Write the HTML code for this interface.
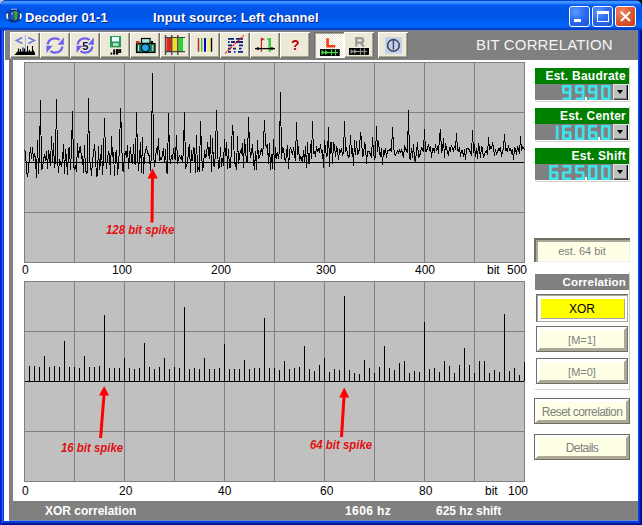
<!DOCTYPE html>
<html><head><meta charset="utf-8">
<style>
*{box-sizing:border-box}
html,body{margin:0;padding:0;width:642px;height:525px;overflow:hidden;background:#0831d9;font-family:"Liberation Sans",sans-serif}
.a{position:absolute}
#frame{left:0;top:0;width:642px;height:525px;background:#0c46d4;border-radius:7px 7px 0 0;
 box-shadow:inset 1px 0 #001ccf, inset -1px 0 #001090, inset 0 -1px #001090, inset 2px 0 #0a2ee0, inset -2px 0 #0018a0, inset 0 -2px #0020a8, inset 3px 0 #2060ff, inset -3px 0 #0030d8, inset 0 -3px #0a36c8}
#title{left:0;top:0;width:642px;height:30px;border-radius:7px 7px 0 0;
 background:linear-gradient(180deg,#0a44c8 0px,#0a44c8 1px,#3d95ff 1px,#3d95ff 3px,#1a70f6 4px,#0058ee 6px,#0054e3 14px,#0058e8 19px,#0064fc 23px,#0066ff 26px,#0060f8 27px,#0048d0 28px,#003cc0 30px)}
.tt{color:#fff;font-weight:bold;font-size:13px;top:10px;text-shadow:1px 1px #0a1e80;white-space:nowrap}
.tb{top:6px;width:21px;height:21px;border:1px solid #fff;border-radius:3px}
.blu{background:radial-gradient(circle at 30% 25%,#5a9cff 0,#2d6cf0 45%,#1850dc 100%)}
#toolbar{left:4px;top:30px;width:634px;height:30px;background:#808080;border-left:1px solid #fff}
.btn{top:32px;width:30px;height:26px;background:#ece9d8;
 box-shadow:inset 1px 1px #fff, inset -1px -1px #716f64, inset -2px -2px #aca899}
.btn svg{position:absolute;left:0;top:0}
#leftw{left:4px;top:60px;width:5px;height:461px;background:#fff}
#leftg{left:9px;top:60px;width:4px;height:441px;background:#808080}
#panel{left:13px;top:60px;width:625px;height:441px;background:#fff}
#status{left:9px;top:501px;width:629px;height:20px;background:#808080;box-shadow:inset 0 -1px #7088d0}
.st{color:#fff;font-weight:bold;font-size:12px;top:504px;white-space:nowrap}
.lbl{font-size:12px;color:#000;top:263px;white-space:nowrap;line-height:14px}
.lbl2{top:484px}
.grn{left:535px;width:94px;height:16px;background:#008000;color:#fff;font-weight:bold;font-size:12px;text-align:right;padding-right:3px;line-height:16px;white-space:nowrap;letter-spacing:0.25px}
.lcd{left:535px;width:93px;height:16px;background:#808080}
.dd{left:613px;width:15px;height:16px;background:#c0c0c0;box-shadow:inset 1px 1px #dfdfdf, inset -1px 0 #000, inset 0 -1px #404040, inset -2px -2px #808080}
.dd:after{content:"";position:absolute;left:3.5px;top:6px;border-left:3.5px solid transparent;border-right:3.5px solid transparent;border-top:4px solid #000}
.rline{left:629px;width:1px;background:#d4d0c8}
.bline{left:535px;height:1px;width:95px;background:#d4d0c8}
.rb{left:536px;width:92px;height:26px;background:#ffffe6;border:1px solid #716f64}
.rb:before{content:"";position:absolute;left:0;top:0;right:0;bottom:0;border:3px solid;border-color:#fff #aca899 #aca899 #fff}
.rbt{left:536px;width:92px;color:#808080;font-size:11px;text-align:center;line-height:25px;white-space:nowrap}
.rt{color:#e01010;font-weight:bold;font-style:italic;font-size:12px;line-height:14px;white-space:nowrap;transform:scaleX(0.95);transform-origin:0 0}
#tline{left:4px;top:30px;width:634px;height:1px;background:#7080a8}
</style></head><body>
<div class="a" style="left:0;top:0;width:6px;height:6px;background:#b8c4d8"></div><div class="a" style="left:636px;top:0;width:6px;height:6px;background:#001010"></div>
<div id="frame" class="a"></div>
<div id="title" class="a"></div>
<!-- globe -->
<svg class="a" style="left:4px;top:6px" width="20" height="20" viewBox="0 0 20 20">
 <ellipse cx="10" cy="9.6" rx="7.4" ry="6.4" fill="none" stroke="#0a1430" stroke-width="1.1" stroke-dasharray="1.3 0.9"/>
 <path d="M3.8,7.5 C2.9,9 2.9,11 4,12.8" stroke="#f0f8ff" stroke-width="1.8" fill="none"/>
 <path d="M16.2,7.5 C17.1,9 17.1,11 16,12.8" stroke="#f0f8ff" stroke-width="1.8" fill="none"/>
 <path d="M7,3.4 C9,3 11,3 13,3.4" stroke="#9ab8f8" stroke-width="1" fill="none"/>
 <circle cx="10" cy="9.8" r="5.3" fill="#2452a8" stroke="#0a1840" stroke-width="0.9"/>
 <path d="M10.5,5.2 C12,4.8 13.8,5.6 13.8,7.2 C13.8,8.6 12.6,9 13.2,10.8 C13.6,12.3 12.6,14.2 11.3,14.6 C10.8,13.4 11.2,12 10.3,11 C9.7,10.2 10.2,9.2 10.9,8.6 C10,8 9.7,6.2 10.5,5.2Z" fill="#3aa82c"/>
 <path d="M7.3,7.6 C7.5,6.6 8.2,6 8.9,5.8 L8.4,9 C7.8,9 7.3,8.5 7.3,7.6Z" fill="#a8a8f0"/>
</svg>
<div class="a tt" style="left:25px;letter-spacing:0.1px">Decoder 01-1</div>
<div class="a tt" style="left:153px;letter-spacing:0.12px">Input source: Left channel</div>
<div class="a tb blu" style="left:569px"><div class="a" style="left:4px;top:12px;width:7px;height:3px;background:#fff"></div></div>
<div class="a tb blu" style="left:592px"><div class="a" style="left:4px;top:4px;width:12px;height:11px;border:1px solid #fff;border-top-width:3px"></div></div>
<div class="a tb" style="left:615px;background:radial-gradient(circle at 30% 25%,#f08a68 0,#e05a34 45%,#c43c18 100%)">
 <svg class="a" style="left:0;top:0" width="19" height="19"><path d="M5,5 L14,14 M14,5 L5,14" stroke="#fff" stroke-width="2"/></svg></div>

<div id="toolbar" class="a"></div><div id="tline" class="a"></div>
<div class="a" style="left:476px;top:36px;color:#f4f4f4;font-size:15px;letter-spacing:0.15px;white-space:nowrap">BIT CORRELATION</div>
<div class="a btn" style="left:10px"><svg width="30" height="26" viewBox="0 0 30 26"><polyline points="12.3,5.4 6.5,8.4 12.3,11.4" stroke="#6b7fe0" stroke-width="1.7" fill="none"/>
<polyline points="18.3,5.4 24.3,8.4 18.3,11.4" stroke="#6b7fe0" stroke-width="1.7" fill="none"/>
<path d="M15.4,3 V19" stroke="#a8b0f0" stroke-width="1"/>
<path d="M4.5,23 L6.5,20.5 L7.5,19.5 L24,19.5 L25,21 L25,23Z" fill="#000"/>
<path d="M8.5,20 V16.5 M10.5,20 V17 M13,20 V15.5 M14.5,20 V16.5 M17.5,20 V14 M19.5,20 V18 M22.5,20 V14 M23.5,20 V18.5" stroke="#000" stroke-width="1.1"/></svg></div>
<div class="a btn" style="left:40px"><svg width="30" height="26" viewBox="0 0 30 26"><path d="M7.5,12.5 C8.5,8 12,6.3 15,6.3 C17,6.3 18.5,7 19.5,8" stroke="#6c5cf0" stroke-width="2.2" fill="none"/>
<polygon points="23.8,5.5 23.8,12.7 17.8,12.7" fill="#6c5cf0"/>
<path d="M22.5,14.5 C21.5,19 18,20.7 15,20.7 C13,20.7 11.5,20 10.5,19" stroke="#6c5cf0" stroke-width="2.2" fill="none"/>
<polygon points="6.5,21 6.5,13.8 12.5,13.8" fill="#6c5cf0"/></svg></div>
<div class="a btn" style="left:70px"><svg width="30" height="26" viewBox="0 0 30 26"><path d="M7.5,12.5 C8.5,8 12,6.3 15,6.3 C17,6.3 18.5,7 19.5,8" stroke="#6c5cf0" stroke-width="2.2" fill="none"/>
<polygon points="23.8,5.5 23.8,12.7 17.8,12.7" fill="#6c5cf0"/>
<path d="M22.5,14.5 C21.5,19 18,20.7 15,20.7 C13,20.7 11.5,20 10.5,19" stroke="#6c5cf0" stroke-width="2.2" fill="none"/>
<polygon points="6.5,21 6.5,13.8 12.5,13.8" fill="#6c5cf0"/><text x="15.3" y="17.5" font-family="Liberation Sans" font-weight="bold" font-size="11" fill="#101050" text-anchor="middle">5</text></svg></div>
<div class="a btn" style="left:100px"><svg width="30" height="26" viewBox="0 0 30 26"><rect x="10" y="4" width="11" height="11.4" fill="#2a9a5a"/>
<rect x="12" y="5" width="7" height="4.5" fill="#e8ffff"/>
<rect x="13" y="11.2" width="5.5" height="2.6" fill="#b8e8d0"/>
<rect x="10.6" y="20.6" width="1.6" height="2" fill="#000"/>
<rect x="13.2" y="17.4" width="2" height="5.2" fill="#000"/>
<rect x="16" y="17.4" width="2.2" height="5.2" fill="#000"/><rect x="16" y="17.4" width="5" height="1.6" fill="#000"/><rect x="19.6" y="17.4" width="1.6" height="3.4" fill="#000"/><rect x="16" y="19.4" width="5" height="1.5" fill="#000"/></svg></div>
<div class="a btn" style="left:130px"><svg width="30" height="26" viewBox="0 0 30 26"><rect x="6.5" y="11.5" width="18.5" height="9" fill="#1e7a58" stroke="#000" stroke-width="1.2"/>
<rect x="11.5" y="6.5" width="8.5" height="4.8" fill="#a8e8dc" stroke="#000" stroke-width="1.2"/>
<rect x="6" y="9" width="3.5" height="2.5" fill="#d03030"/>
<rect x="21" y="9" width="2" height="2.5" fill="#000"/>
<path d="M8.5,13 V19 M22.8,13 V19" stroke="#b0f0d8" stroke-width="1"/>
<circle cx="15.4" cy="15.8" r="4" fill="#20a8f0" stroke="#000" stroke-width="1.2"/></svg></div>
<div class="a btn" style="left:160px"><svg width="30" height="26" viewBox="0 0 30 26"><rect x="6.5" y="5.7" width="4.6" height="13.7" fill="#f02010"/>
<rect x="12.5" y="5.7" width="4.6" height="13.7" fill="#f0e020"/>
<rect x="18.5" y="5.7" width="4.6" height="13.7" fill="#30d030"/>
<rect x="23" y="5.7" width="1.6" height="13.7" fill="#c8ffc8"/>
<path d="M5.5,3 V23 M11.7,3 V23 M17.8,3 V23" stroke="#505050" stroke-width="1.5"/>
<path d="M5,5.5 H25 M5,19.6 H25" stroke="#404040" stroke-width="1.2"/></svg></div>
<div class="a btn" style="left:190px"><svg width="30" height="26" viewBox="0 0 30 26"><path d="M8.5,6 V19.7" stroke="#b03020" stroke-width="1.5"/>
<path d="M11.7,6 V19.7" stroke="#40c040" stroke-width="1.5"/>
<path d="M15,6 V19.7" stroke="#0000d0" stroke-width="2"/>
<path d="M18.6,6 V19.7" stroke="#f0f060" stroke-width="2.5"/>
<path d="M21.5,6 V19.7" stroke="#000" stroke-width="1.4"/></svg></div>
<div class="a btn" style="left:220px"><svg width="30" height="26" viewBox="0 0 30 26"><g stroke="#102080" stroke-width="1.8">
<path d="M8,6.9 H14 M16,6.9 H23 M8,10 H9.5 M11,10 H15 M16,10 H23 M8,13.4 H12 M19,13.4 H23 M8,16.6 H11 M13,16.6 H16 M19,16.6 H21.5 M8,19.8 H11 M14,19.8 H15.5 M18,19.8 H23"/></g>
<path d="M5,21.4 L23.7,3.4" stroke="#e02020" stroke-width="1.3" stroke-dasharray="2.5 1"/></svg></div>
<div class="a btn" style="left:250px"><svg width="30" height="26" viewBox="0 0 30 26"><path d="M11.4,6 V19.7" stroke="#c03020" stroke-width="1.3"/>
<polygon points="11.4,5.5 14.8,7.2 11.4,9" fill="#c03020"/>
<path d="M19.7,6 V19.7" stroke="#40c840" stroke-width="2.6"/>
<polygon points="18.5,6 18.5,8.5 16.5,7" fill="#40c840"/>
<path d="M5,16.6 H25" stroke="#000" stroke-width="1.3"/>
<circle cx="8" cy="16.6" r="1.4" fill="#000"/><circle cx="22" cy="16.6" r="1.4" fill="#000"/></svg></div>
<div class="a btn" style="left:280px"><svg width="30" height="26" viewBox="0 0 30 26"><text x="15.3" y="17.8" font-family="Liberation Sans" font-weight="bold" font-size="14" fill="#c00000" text-anchor="middle">?</text></svg></div>
<div class="a btn" style="left:314px;background:repeating-conic-gradient(#ffffff 0 25%,#ece9d8 0 50%) 0 0/2px 2px;box-shadow:inset 1px 1px #716f64, inset 2px 2px #aca899, inset -1px -1px #fff"><svg width="30" height="26" viewBox="0 0 30 26"><path d="M13.6,6.3 V14.3 H21.2" stroke="#f04010" stroke-width="2.6" fill="none"/>
<rect x="6" y="17.1" width="19.7" height="6.9" fill="#000"/>
<path d="M7.5,20.5 H24" stroke="#40e040" stroke-width="1.2"/>
<polygon points="7.5,18 11,20.5 7.5,23" fill="#40e040"/><polygon points="11,18 14.5,20.5 11,23" fill="#40e040"/>
<path d="M17.5,17.5 V23.5 M21.5,17.5 V23.5" stroke="#40e040" stroke-width="1.2"/></svg></div>
<div class="a btn" style="left:344px"><svg width="30" height="26" viewBox="0 0 30 26"><path d="M12.3,14.6 V6.2 H16.3 C18.4,6.2 19.2,7.2 19.2,8.4 C19.2,9.7 18.4,10.6 16.3,10.6 H12.3 M16.3,10.6 L19.8,14.6" stroke="#999" stroke-width="2.3" fill="none"/>
<rect x="5" y="16" width="20" height="6.9" fill="#000"/>
<path d="M6.5,19.5 H23" stroke="#909090" stroke-width="1.2"/>
<polygon points="6.5,17 10,19.5 6.5,22" fill="#909090"/><polygon points="10,17 13.5,19.5 10,22" fill="#909090"/>
<path d="M16.5,16.5 V22.5 M20.5,16.5 V22.5" stroke="#909090" stroke-width="1.2"/></svg></div>
<div class="a btn" style="left:378px"><svg width="30" height="26" viewBox="0 0 30 26"><rect x="7" y="5.1" width="17" height="16.6" fill="#c4d0ec"/>
<circle cx="15.4" cy="13.4" r="5.8" stroke="#404860" stroke-width="1.6" fill="none"/>
<path d="M15.4,7.2 V17.7" stroke="#404860" stroke-width="1.4"/></svg></div>


<div id="leftw" class="a"></div>
<div id="leftg" class="a"></div>
<div id="panel" class="a"></div>
<div id="status" class="a"></div>
<div class="a st" style="left:45px">XOR correlation</div>
<div class="a st" style="left:345px;letter-spacing:0.4px">1606 hz</div>
<div class="a st" style="left:436px">625 hz shift</div>

<svg class="a" style="left:0;top:0" width="642" height="525" shape-rendering="crispEdges">
 <rect x="24.5" y="62.5" width="500" height="200" fill="#c0c0c0" stroke="#808080"/>
 <rect x="24.5" y="281.5" width="500" height="200" fill="#c0c0c0" stroke="#808080"/>
 <path d="M74.5,62 V262 M124.5,62 V262 M174.5,62 V262 M224.5,62 V262 M274.5,62 V262 M324.5,62 V262 M374.5,62 V262 M424.5,62 V262 M474.5,62 V262 M24,112.5 H525 M24,162.5 H525 M24,212.5 H525 " stroke="#808080" fill="none"/>
 <path d="M74.5,281 V481 M124.5,281 V481 M174.5,281 V481 M224.5,281 V481 M274.5,281 V481 M324.5,281 V481 M374.5,281 V481 M424.5,281 V481 M474.5,281 V481 M24,331.5 H525 M24,381.5 H525 M24,431.5 H525 " stroke="#808080" fill="none"/>
 <path d="M25,162.5 H524" stroke="#000"/>
 <path d="M25,381.5 H524" stroke="#000"/>
 <path d="M29.5,381 V366 M34.5,381 V366 M39.5,381 V367 M44.5,381 V356 M49.5,381 V367 M54.5,381 V366 M59.5,381 V367 M64.5,381 V341 M69.5,381 V367 M74.5,381 V367 M79.5,381 V368 M84.5,381 V356 M89.5,381 V367 M94.5,381 V367 M99.5,381 V366 M104.5,381 V315 M109.5,381 V368 M114.5,381 V368 M119.5,381 V368 M124.5,381 V358 M129.5,381 V368 M134.5,381 V369 M139.5,381 V368 M144.5,381 V343 M149.5,381 V367 M154.5,381 V369 M159.5,381 V367 M164.5,381 V358 M169.5,381 V369 M174.5,381 V367 M179.5,381 V368 M184.5,381 V307 M189.5,381 V369 M194.5,381 V368 M199.5,381 V369 M204.5,381 V358 M209.5,381 V369 M214.5,381 V369 M219.5,381 V368 M224.5,381 V344 M229.5,381 V369 M234.5,381 V369 M239.5,381 V369 M244.5,381 V360 M249.5,381 V369 M254.5,381 V368 M259.5,381 V368 M264.5,381 V318 M269.5,381 V368 M274.5,381 V368 M279.5,381 V370 M284.5,381 V361 M289.5,381 V369 M294.5,381 V368 M299.5,381 V367 M304.5,381 V346 M309.5,381 V369 M314.5,381 V371 M319.5,381 V365 M324.5,381 V358 M329.5,381 V372 M334.5,381 V369 M339.5,381 V370 M344.5,381 V296 M349.5,381 V370 M354.5,381 V373 M359.5,381 V374 M364.5,381 V360 M369.5,381 V368 M374.5,381 V373 M379.5,381 V367 M384.5,381 V346 M389.5,381 V368 M394.5,381 V370 M399.5,381 V363 M404.5,381 V361 M409.5,381 V373 M414.5,381 V371 M419.5,381 V372 M424.5,381 V322 M429.5,381 V369 M434.5,381 V368 M439.5,381 V372 M444.5,381 V361 M449.5,381 V366 M454.5,381 V373 M459.5,381 V365 M464.5,381 V348 M469.5,381 V365 M474.5,381 V373 M479.5,381 V361 M484.5,381 V361 M489.5,381 V373 M494.5,381 V370 M499.5,381 V372 M504.5,381 V314 M509.5,381 V371 M514.5,381 V368 M519.5,381 V375 M524.5,381 V362" stroke="#000" fill="none"/>
</svg>
<svg class="a" style="left:0;top:0" width="642" height="525">
 <path d="M24.5,150.0 L25.5,152.0 L26.5,170.0 L27.5,177.0 L28.5,169.0 L29.5,157.0 L30.5,147.0 L31.5,159.0 L32.5,147.0 L33.5,161.0 L34.5,153.0 L35.5,159.0 L36.5,178.0 L37.5,140.0 L38.5,174.0 L39.5,152.0 L40.5,100.0 L41.5,169.0 L42.5,168.0 L43.5,161.0 L44.5,154.0 L45.5,161.0 L46.5,151.0 L47.5,169.0 L48.5,150.0 L49.5,158.0 L50.5,166.0 L51.5,136.0 L52.5,162.0 L53.5,143.0 L54.5,168.0 L55.5,160.0 L56.5,99.0 L57.5,158.0 L58.5,173.0 L59.5,159.0 L60.5,163.0 L61.5,167.0 L62.5,160.0 L63.5,144.0 L64.5,174.0 L65.5,149.0 L66.5,158.0 L67.5,175.0 L68.5,150.0 L69.5,147.0 L70.5,170.0 L71.5,149.0 L72.5,111.0 L73.5,165.0 L74.5,170.0 L75.5,165.0 L76.5,172.0 L77.5,143.0 L78.5,158.0 L79.5,148.0 L80.5,147.0 L81.5,159.0 L82.5,156.0 L83.5,173.0 L84.5,145.0 L85.5,170.0 L86.5,173.0 L87.5,172.0 L88.5,98.0 L89.5,162.0 L90.5,163.0 L91.5,176.0 L92.5,160.0 L93.5,154.0 L94.5,144.0 L95.5,158.0 L96.5,176.0 L97.5,175.0 L98.5,146.0 L99.5,170.0 L100.5,163.0 L101.5,145.0 L102.5,175.0 L103.5,158.0 L104.5,118.0 L105.5,154.0 L106.5,169.0 L107.5,158.0 L108.5,152.0 L109.5,154.0 L110.5,175.0 L111.5,136.0 L112.5,157.0 L113.5,152.0 L114.5,176.0 L115.5,154.0 L116.5,150.0 L117.5,175.0 L118.5,163.0 L119.5,150.0 L120.5,108.0 L121.5,135.0 L122.5,169.0 L123.5,172.0 L124.5,154.0 L125.5,152.0 L126.5,158.0 L127.5,145.0 L128.5,169.0 L129.5,156.0 L130.5,147.0 L131.5,161.0 L132.5,164.0 L133.5,144.0 L134.5,163.0 L135.5,165.0 L136.5,112.0 L137.5,154.0 L138.5,171.0 L139.5,158.0 L140.5,142.0 L141.5,173.0 L142.5,137.0 L143.5,174.0 L144.5,155.0 L145.5,151.0 L146.5,148.0 L147.5,152.0 L148.5,155.0 L149.5,156.0 L150.5,171.0 L151.5,151.0 L152.5,73.0 L153.5,152.0 L154.5,167.0 L155.5,158.0 L156.5,148.0 L157.5,155.0 L158.5,138.0 L159.5,161.0 L160.5,158.0 L161.5,159.0 L162.5,155.0 L163.5,148.0 L164.5,163.0 L165.5,149.0 L166.5,171.0 L167.5,174.0 L168.5,113.0 L169.5,155.0 L170.5,164.0 L171.5,155.0 L172.5,160.0 L173.5,148.0 L174.5,157.0 L175.5,160.0 L176.5,135.0 L177.5,164.0 L178.5,158.0 L179.5,156.0 L180.5,158.0 L181.5,156.0 L182.5,163.0 L183.5,149.0 L184.5,112.0 L185.5,169.0 L186.5,165.0 L187.5,163.0 L188.5,151.0 L189.5,144.0 L190.5,173.0 L191.5,150.0 L192.5,161.0 L193.5,147.0 L194.5,150.0 L195.5,173.0 L196.5,135.0 L197.5,172.0 L198.5,167.0 L199.5,172.0 L200.5,121.0 L201.5,150.0 L202.5,171.0 L203.5,166.0 L204.5,150.0 L205.5,157.0 L206.5,156.0 L207.5,142.0 L208.5,152.0 L209.5,159.0 L210.5,135.0 L211.5,172.0 L212.5,138.0 L213.5,165.0 L214.5,166.0 L215.5,152.0 L216.5,110.0 L217.5,150.0 L218.5,168.0 L219.5,167.0 L220.5,147.0 L221.5,167.0 L222.5,158.0 L223.5,166.0 L224.5,139.0 L225.5,156.0 L226.5,142.0 L227.5,169.0 L228.5,149.0 L229.5,167.0 L230.5,167.0 L231.5,147.0 L232.5,125.0 L233.5,137.0 L234.5,163.0 L235.5,163.0 L236.5,170.0 L237.5,136.0 L238.5,164.0 L239.5,156.0 L240.5,151.0 L241.5,153.0 L242.5,143.0 L243.5,168.0 L244.5,139.0 L245.5,149.0 L246.5,163.0 L247.5,160.0 L248.5,117.0 L249.5,145.0 L250.5,158.0 L251.5,152.0 L252.5,144.0 L253.5,161.0 L254.5,170.0 L255.5,151.0 L256.5,170.0 L257.5,140.0 L258.5,158.0 L259.5,157.0 L260.5,153.0 L261.5,148.0 L262.5,156.0 L263.5,143.0 L264.5,120.0 L265.5,144.0 L266.5,147.0 L267.5,145.0 L268.5,164.0 L269.5,143.0 L270.5,170.0 L271.5,154.0 L272.5,169.0 L273.5,139.0 L274.5,170.0 L275.5,147.0 L276.5,159.0 L277.5,152.0 L278.5,159.0 L279.5,150.0 L280.5,92.0 L281.5,159.0 L282.5,148.0 L283.5,149.0 L284.5,157.0 L285.5,162.0 L286.5,154.0 L287.5,145.0 L288.5,169.0 L289.5,151.0 L290.5,147.0 L291.5,151.0 L292.5,155.0 L293.5,147.0 L294.5,155.0 L295.5,161.0 L296.5,122.0 L297.5,155.0 L298.5,146.0 L299.5,161.0 L300.5,157.0 L301.5,158.0 L302.5,163.0 L303.5,150.0 L304.5,163.0 L305.5,146.0 L306.5,168.0 L307.5,142.0 L308.5,163.0 L309.5,163.0 L310.5,144.0 L311.5,159.0 L312.5,121.0 L313.5,154.0 L314.5,151.0 L315.5,157.0 L316.5,146.0 L317.5,151.0 L318.5,149.0 L319.5,153.0 L320.5,144.0 L321.5,153.0 L322.5,150.0 L323.5,168.0 L324.5,140.0 L325.5,150.0 L326.5,156.0 L327.5,155.0 L328.5,127.0 L329.5,167.0 L330.5,142.0 L331.5,142.0 L332.5,164.0 L333.5,143.0 L334.5,145.0 L335.5,157.0 L336.5,147.0 L337.5,149.0 L338.5,160.0 L339.5,150.0 L340.5,152.0 L341.5,148.0 L342.5,155.0 L343.5,153.0 L344.5,121.0 L345.5,152.0 L346.5,147.0 L347.5,154.0 L348.5,157.0 L349.5,156.0 L350.5,135.0 L351.5,154.0 L352.5,148.0 L353.5,166.0 L354.5,140.0 L355.5,155.0 L356.5,141.0 L357.5,155.0 L358.5,152.0 L359.5,149.0 L360.5,132.0 L361.5,140.0 L362.5,156.0 L363.5,155.0 L364.5,143.0 L365.5,145.0 L366.5,164.0 L367.5,151.0 L368.5,151.0 L369.5,152.0 L370.5,155.0 L371.5,157.0 L372.5,137.0 L373.5,152.0 L374.5,159.0 L375.5,157.0 L376.5,126.0 L377.5,152.0 L378.5,141.0 L379.5,152.0 L380.5,157.0 L381.5,148.0 L382.5,165.0 L383.5,150.0 L384.5,153.0 L385.5,148.0 L386.5,158.0 L387.5,150.0 L388.5,150.0 L389.5,150.0 L390.5,149.0 L391.5,152.0 L392.5,127.0 L393.5,146.0 L394.5,154.0 L395.5,155.0 L396.5,153.0 L397.5,151.0 L398.5,153.0 L399.5,150.0 L400.5,152.0 L401.5,150.0 L402.5,153.0 L403.5,158.0 L404.5,146.0 L405.5,148.0 L406.5,151.0 L407.5,153.0 L408.5,110.0 L409.5,158.0 L410.5,159.0 L411.5,148.0 L412.5,158.0 L413.5,144.0 L414.5,160.0 L415.5,161.0 L416.5,152.0 L417.5,142.0 L418.5,157.0 L419.5,156.0 L420.5,153.0 L421.5,147.0 L422.5,150.0 L423.5,151.0 L424.5,129.0 L425.5,151.0 L426.5,151.0 L427.5,148.0 L428.5,144.0 L429.5,149.0 L430.5,146.0 L431.5,158.0 L432.5,148.0 L433.5,148.0 L434.5,153.0 L435.5,144.0 L436.5,151.0 L437.5,146.0 L438.5,154.0 L439.5,137.0 L440.5,129.0 L441.5,152.0 L442.5,150.0 L443.5,138.0 L444.5,158.0 L445.5,143.0 L446.5,149.0 L447.5,151.0 L448.5,156.0 L449.5,147.0 L450.5,150.0 L451.5,145.0 L452.5,149.0 L453.5,151.0 L454.5,146.0 L455.5,150.0 L456.5,133.0 L457.5,150.0 L458.5,151.0 L459.5,147.0 L460.5,157.0 L461.5,150.0 L462.5,150.0 L463.5,157.0 L464.5,149.0 L465.5,160.0 L466.5,149.0 L467.5,148.0 L468.5,148.0 L469.5,151.0 L470.5,151.0 L471.5,156.0 L472.5,130.0 L473.5,153.0 L474.5,144.0 L475.5,157.0 L476.5,148.0 L477.5,159.0 L478.5,143.0 L479.5,149.0 L480.5,158.0 L481.5,146.0 L482.5,149.0 L483.5,158.0 L484.5,154.0 L485.5,152.0 L486.5,151.0 L487.5,155.0 L488.5,137.0 L489.5,150.0 L490.5,147.0 L491.5,148.0 L492.5,144.0 L493.5,147.0 L494.5,156.0 L495.5,149.0 L496.5,154.0 L497.5,152.0 L498.5,149.0 L499.5,150.0 L500.5,147.0 L501.5,157.0 L502.5,151.0 L503.5,149.0 L504.5,134.0 L505.5,150.0 L506.5,149.0 L507.5,152.0 L508.5,145.0 L509.5,150.0 L510.5,149.0 L511.5,152.0 L512.5,149.0 L513.5,160.0 L514.5,148.0 L515.5,149.0 L516.5,155.0 L517.5,146.0 L518.5,150.0 L519.5,154.0 L520.5,136.0 L521.5,151.0 L522.5,147.0 L523.5,148.0 L524.5,150.0" stroke="#000" stroke-width="1" fill="none" shape-rendering="crispEdges"/>
 <!-- arrows -->
 <path d="M152.5,178 L152,222.5" stroke="#ff0000" stroke-width="3"/>
 <path d="M152.5,168.5 L157.8,178.5 L147.4,178.5Z" fill="#ff0000"/>
 <path d="M104,395 L100.6,438" stroke="#ff0000" stroke-width="3"/>
 <path d="M104.2,386 L109,395.5 L99,395.5Z" fill="#ff0000"/>
 <path d="M344,397 L341.5,437" stroke="#ff0000" stroke-width="3"/>
 <path d="M344.2,387.5 L349.2,397.5 L339.2,397.5Z" fill="#ff0000"/>
</svg>
<div class="a rt" style="left:106px;top:223px">128 bit spike</div>
<div class="a rt" style="left:61px;top:441px">16 bit spike</div>
<div class="a rt" style="left:310px;top:438px">64 bit spike</div>

<!-- axis labels -->
<div class="a lbl" style="left:22px">0</div>
<div class="a lbl" style="left:112px">100</div>
<div class="a lbl" style="left:211px">200</div>
<div class="a lbl" style="left:316px">300</div>
<div class="a lbl" style="left:415px">400</div>
<div class="a lbl" style="left:487px">bit</div>
<div class="a lbl" style="left:507px">500</div>
<div class="a lbl lbl2" style="left:22px">0</div>
<div class="a lbl lbl2" style="left:119px">20</div>
<div class="a lbl lbl2" style="left:218px">40</div>
<div class="a lbl lbl2" style="left:320px">60</div>
<div class="a lbl lbl2" style="left:419px">80</div>
<div class="a lbl lbl2" style="left:485px">bit</div>
<div class="a lbl lbl2" style="left:508px">100</div>

<!-- right panel -->
<div class="a grn" style="top:68px">Est. Baudrate</div>
<div class="a lcd" style="top:84px"></div>
<div class="a dd" style="top:84px"></div>
<div class="a rline" style="top:66px;height:35px"></div>
<div class="a bline" style="top:101px"></div>
<div class="a grn" style="top:108px">Est. Center</div>
<div class="a lcd" style="top:124px"></div>
<div class="a dd" style="top:124px"></div>
<div class="a rline" style="top:106px;height:35px"></div>
<div class="a bline" style="top:141px"></div>
<div class="a grn" style="top:148px">Est. Shift</div>
<div class="a lcd" style="top:164px"></div>
<div class="a dd" style="top:164px"></div>
<div class="a rline" style="top:146px;height:35px"></div>
<div class="a bline" style="top:181px"></div>
<svg class="a" style="left:0;top:0" width="642" height="525"><rect x="562.5" y="85" width="8.5" height="2.5" fill="#3ce6f0"/><rect x="568.8" y="85.5" width="2.7" height="7" fill="#3ce6f0"/><rect x="568.8" y="92.5" width="2.7" height="7" fill="#3ce6f0"/><rect x="562.5" y="97.5" width="8.5" height="2.5" fill="#3ce6f0"/><rect x="562" y="85.5" width="2.7" height="7" fill="#3ce6f0"/><rect x="562.5" y="91.3" width="8.5" height="2.4" fill="#3ce6f0"/><rect x="575.5" y="85" width="8.5" height="2.5" fill="#3ce6f0"/><rect x="581.8" y="85.5" width="2.7" height="7" fill="#3ce6f0"/><rect x="581.8" y="92.5" width="2.7" height="7" fill="#3ce6f0"/><rect x="575.5" y="97.5" width="8.5" height="2.5" fill="#3ce6f0"/><rect x="575" y="85.5" width="2.7" height="7" fill="#3ce6f0"/><rect x="575.5" y="91.3" width="8.5" height="2.4" fill="#3ce6f0"/><rect x="588.5" y="85" width="8.5" height="2.5" fill="#3ce6f0"/><rect x="594.8" y="85.5" width="2.7" height="7" fill="#3ce6f0"/><rect x="594.8" y="92.5" width="2.7" height="7" fill="#3ce6f0"/><rect x="588.5" y="97.5" width="8.5" height="2.5" fill="#3ce6f0"/><rect x="588" y="85.5" width="2.7" height="7" fill="#3ce6f0"/><rect x="588.5" y="91.3" width="8.5" height="2.4" fill="#3ce6f0"/><rect x="601.5" y="85" width="8.5" height="2.5" fill="#3ce6f0"/><rect x="607.8" y="85.5" width="2.7" height="7" fill="#3ce6f0"/><rect x="607.8" y="92.5" width="2.7" height="7" fill="#3ce6f0"/><rect x="601.5" y="97.5" width="8.5" height="2.5" fill="#3ce6f0"/><rect x="601" y="92.5" width="2.7" height="7" fill="#3ce6f0"/><rect x="601" y="85.5" width="2.7" height="7" fill="#3ce6f0"/><rect x="585" y="97" width="2" height="3" fill="#fff"/><rect x="555.8" y="125.5" width="2.7" height="7" fill="#3ce6f0"/><rect x="555.8" y="132.5" width="2.7" height="7" fill="#3ce6f0"/><rect x="562.5" y="125" width="8.5" height="2.5" fill="#3ce6f0"/><rect x="568.8" y="132.5" width="2.7" height="7" fill="#3ce6f0"/><rect x="562.5" y="137.5" width="8.5" height="2.5" fill="#3ce6f0"/><rect x="562" y="132.5" width="2.7" height="7" fill="#3ce6f0"/><rect x="562" y="125.5" width="2.7" height="7" fill="#3ce6f0"/><rect x="562.5" y="131.3" width="8.5" height="2.4" fill="#3ce6f0"/><rect x="575.5" y="125" width="8.5" height="2.5" fill="#3ce6f0"/><rect x="581.8" y="125.5" width="2.7" height="7" fill="#3ce6f0"/><rect x="581.8" y="132.5" width="2.7" height="7" fill="#3ce6f0"/><rect x="575.5" y="137.5" width="8.5" height="2.5" fill="#3ce6f0"/><rect x="575" y="132.5" width="2.7" height="7" fill="#3ce6f0"/><rect x="575" y="125.5" width="2.7" height="7" fill="#3ce6f0"/><rect x="588.5" y="125" width="8.5" height="2.5" fill="#3ce6f0"/><rect x="594.8" y="132.5" width="2.7" height="7" fill="#3ce6f0"/><rect x="588.5" y="137.5" width="8.5" height="2.5" fill="#3ce6f0"/><rect x="588" y="132.5" width="2.7" height="7" fill="#3ce6f0"/><rect x="588" y="125.5" width="2.7" height="7" fill="#3ce6f0"/><rect x="588.5" y="131.3" width="8.5" height="2.4" fill="#3ce6f0"/><rect x="601.5" y="125" width="8.5" height="2.5" fill="#3ce6f0"/><rect x="607.8" y="125.5" width="2.7" height="7" fill="#3ce6f0"/><rect x="607.8" y="132.5" width="2.7" height="7" fill="#3ce6f0"/><rect x="601.5" y="137.5" width="8.5" height="2.5" fill="#3ce6f0"/><rect x="601" y="132.5" width="2.7" height="7" fill="#3ce6f0"/><rect x="601" y="125.5" width="2.7" height="7" fill="#3ce6f0"/><rect x="598" y="137" width="2" height="3" fill="#fff"/><rect x="549.5" y="165" width="8.5" height="2.5" fill="#3ce6f0"/><rect x="555.8" y="172.5" width="2.7" height="7" fill="#3ce6f0"/><rect x="549.5" y="177.5" width="8.5" height="2.5" fill="#3ce6f0"/><rect x="549" y="172.5" width="2.7" height="7" fill="#3ce6f0"/><rect x="549" y="165.5" width="2.7" height="7" fill="#3ce6f0"/><rect x="549.5" y="171.3" width="8.5" height="2.4" fill="#3ce6f0"/><rect x="562.5" y="165" width="8.5" height="2.5" fill="#3ce6f0"/><rect x="568.8" y="165.5" width="2.7" height="7" fill="#3ce6f0"/><rect x="562.5" y="177.5" width="8.5" height="2.5" fill="#3ce6f0"/><rect x="562" y="172.5" width="2.7" height="7" fill="#3ce6f0"/><rect x="562.5" y="171.3" width="8.5" height="2.4" fill="#3ce6f0"/><rect x="575.5" y="165" width="8.5" height="2.5" fill="#3ce6f0"/><rect x="581.8" y="172.5" width="2.7" height="7" fill="#3ce6f0"/><rect x="575.5" y="177.5" width="8.5" height="2.5" fill="#3ce6f0"/><rect x="575" y="165.5" width="2.7" height="7" fill="#3ce6f0"/><rect x="575.5" y="171.3" width="8.5" height="2.4" fill="#3ce6f0"/><rect x="588.5" y="165" width="8.5" height="2.5" fill="#3ce6f0"/><rect x="594.8" y="165.5" width="2.7" height="7" fill="#3ce6f0"/><rect x="594.8" y="172.5" width="2.7" height="7" fill="#3ce6f0"/><rect x="588.5" y="177.5" width="8.5" height="2.5" fill="#3ce6f0"/><rect x="588" y="172.5" width="2.7" height="7" fill="#3ce6f0"/><rect x="588" y="165.5" width="2.7" height="7" fill="#3ce6f0"/><rect x="601.5" y="165" width="8.5" height="2.5" fill="#3ce6f0"/><rect x="607.8" y="165.5" width="2.7" height="7" fill="#3ce6f0"/><rect x="607.8" y="172.5" width="2.7" height="7" fill="#3ce6f0"/><rect x="601.5" y="177.5" width="8.5" height="2.5" fill="#3ce6f0"/><rect x="601" y="172.5" width="2.7" height="7" fill="#3ce6f0"/><rect x="601" y="165.5" width="2.7" height="7" fill="#3ce6f0"/><rect x="585" y="177" width="2" height="3" fill="#fff"/></svg>
<div class="a" style="left:534px;top:238px;width:96px;height:24px;background:#ffffe6;box-shadow:inset 2px 2px #716f64, inset 4px 4px #aca899, inset -1px -1px #f1efe2, inset -2px -2px #fff"></div>
<div class="a" style="left:534px;top:239px;width:96px;color:#808080;font-size:11px;text-align:center;line-height:24px;white-space:nowrap">est. 64 bit</div>
<div class="a" style="left:535px;top:274px;width:94px;height:16px;background:#808080;color:#fff;font-weight:bold;font-size:11.5px;text-align:right;padding-right:3px;line-height:16px;white-space:nowrap;letter-spacing:0.2px">Correlation</div>
<div class="a rline" style="top:272px;height:118px"></div>
<div class="a bline" style="top:389px"></div>
<div class="a" style="left:536px;top:294px;width:92px;height:28px;background:#fff;box-shadow:inset 1px 1px #716f64, inset 2px 2px #aca899, inset -1px -1px #aca899"></div><div class="a" style="left:541px;top:299px;width:84px;height:20px;background:#ffff00;box-shadow:inset -1px -1px #aca899"></div>
<div class="a" style="left:536px;top:296px;width:92px;color:#000;font-size:12px;text-align:center;line-height:27px">XOR</div>
<div class="a rb" style="top:326px"></div><div class="a rbt" style="top:328px">[M=1]</div>
<div class="a rb" style="top:358px"></div><div class="a rbt" style="top:360px">[M=0]</div>
<div class="a rb" style="left:534px;width:96px;top:398px"></div><div class="a rbt" style="left:534px;width:96px;top:400px;font-size:12px;letter-spacing:-0.6px">Reset correlation</div>
<div class="a rb" style="left:534px;width:96px;top:434px"></div><div class="a rbt" style="left:534px;width:96px;top:436px;font-size:12px;letter-spacing:-0.6px">Details</div>

</body></html>
